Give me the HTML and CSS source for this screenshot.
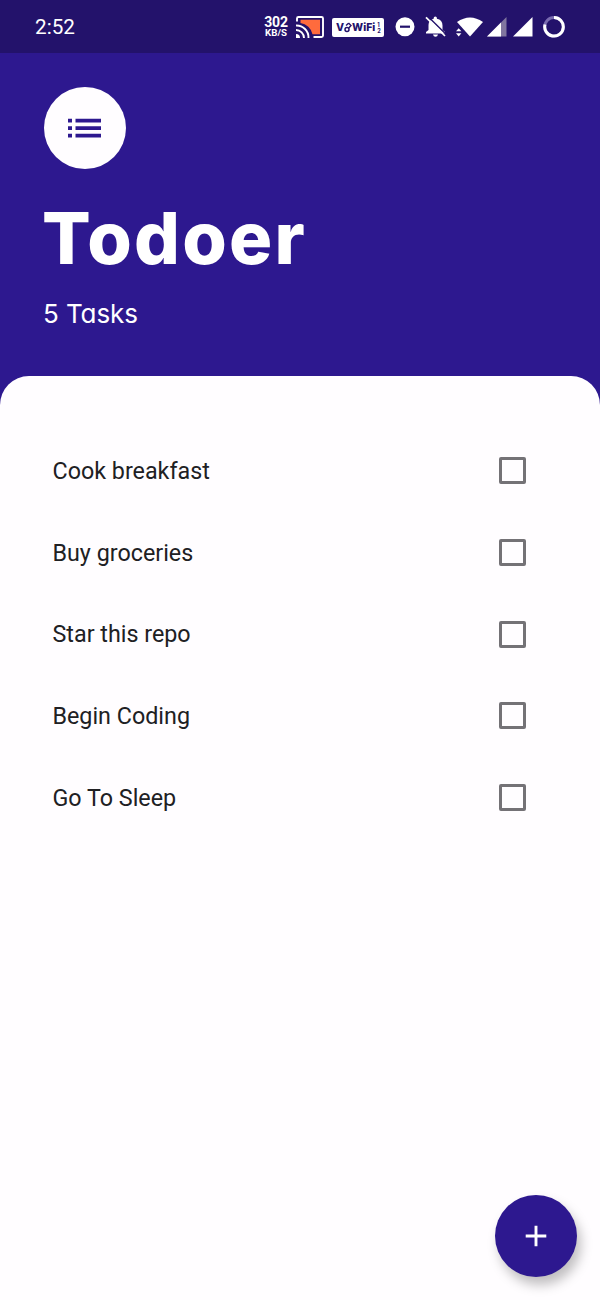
FILE: index.html
```html
<!DOCTYPE html>
<html lang="en">
<head>
<meta charset="utf-8">
<title>Todoer</title>
<link rel="stylesheet" href="styles.css">
</head>
<body>
<div class="app">
  <div class="status">
    <span class="clock">2:52</span>
    <div class="tray">
      <div class="speed"><span class="rate">302</span><span class="unit">KB/S</span></div>
      <svg class="cast" width="30" height="53" viewBox="295 0 30 53">
        <path d="M300.500 19.800H320V34.200H312.500A14 14 0 0 0 300.500 23Z" fill="#ff6b3d"/>
        <path d="M297 21.500V18.500Q297 17 298.500 17H321.500Q323 17 323 18.500V35.500Q323 37 321.500 37H313.500" fill="none" stroke="#fff" stroke-width="1.900"/>
        <path d="M296 25.500A12 12 0 0 1 308.500 38M296 30A8 8 0 0 1 304 38" fill="none" stroke="#fff" stroke-width="1.900"/>
        <path d="M296 34A4 4 0 0 1 300 38H296Z" fill="#fff"/>
      </svg>
      <div class="vowifi"><span>V</span>
        <svg width="8" height="13" viewBox="0 0 8 13"><circle cx="3" cy="8.500" r="2" fill="none" stroke="#23126b" stroke-width="1.500"/><path d="M2 4.500L4.500 2.300M4.800 7L7 4.500L4.500 2" fill="none" stroke="#23126b" stroke-width="1.400"/></svg>
        <span>WiFi</span><span class="sim"><i>1</i><i>2</i></span></div>
      <svg class="dnd" width="20" height="53" viewBox="395 0 20 53"><circle cx="405" cy="26.700" r="9.500" fill="#fff"/><path d="M400 26.700H410" stroke="#23126b" stroke-width="2.200"/></svg>
      <svg class="bell" width="22" height="53" viewBox="425 0 22 53">
        <path d="M426 33.500V32L428.500 30V25Q428.500 20 433.700 18.800V18Q433.700 16.500 435.300 16.500T436.900 18V18.800Q442.500 20 442.500 25.500V30L445 32V33.500ZM433 34.500H438Q437.500 36.700 435.500 36.700T433 34.500Z" fill="#fff"/>
        <path d="M427.500 16L446 34.200" stroke="#23126b" stroke-width="1.400"/><path d="M426 17.300L445 36" stroke="#fff" stroke-width="1.700"/>
      </svg>
      <svg class="wifi" width="27" height="53" viewBox="456 0 27 53"><path d="M457 22Q463.500 17.500 470 17.500T483 22L470 36.500Z" fill="#fff"/><path d="M455.500 27.500H461L463.500 32L461 37H455.500Z" fill="#23126b"/><path d="M456 31.300L458.700 28.200L461.400 31.300ZM456 33.300H461.400L458.700 36.400Z" fill="#fff"/></svg>
      <svg class="signal" width="20" height="53" viewBox="487 0 20 53"><path d="M487 36.500L506.500 17V36.500Z" fill="#80769f"/><path d="M487 36.500L501 22.500V36.500Z" fill="#fff"/></svg>
      <svg class="signal2" width="20" height="53" viewBox="513 0 20 53"><path d="M513 36.500L532.500 17V36.500Z" fill="#fff"/></svg>
      <svg class="battery" width="22" height="53" viewBox="543 0 22 53"><circle cx="554" cy="26.800" r="9.300" fill="none" stroke="#796baf" stroke-width="3"/><path d="M554 17.500A9.300 9.300 0 1 1 545 24.500" fill="none" stroke="#fff" stroke-width="3"/></svg>
    </div>
  </div>
  <header class="header">
    <div class="avatar">
      <svg width="34" height="20" viewBox="0 0 34 20" fill="#2d188f"><path d="M0 .8H4V4.500H0ZM0 8.300H4V12H0ZM0 15.800H4V19.500H0ZM7.500 .8H33V4.500H7.500ZM7.500 8.300H33V12H7.500ZM7.500 15.800H33V19.500H7.500Z"/></svg>
    </div>
    <h1 class="title">Todoer</h1>
    <p class="count">5 Tasks</p>
  </header>
  <main class="sheet">
    <ul class="tasks">
      <li class="task"><span>Cook breakfast</span><span class="box"></span></li>
      <li class="task"><span>Buy groceries</span><span class="box"></span></li>
      <li class="task"><span>Star this repo</span><span class="box"></span></li>
      <li class="task"><span>Begin Coding</span><span class="box"></span></li>
      <li class="task"><span>Go To Sleep</span><span class="box"></span></li>
    </ul>
  </main>
  <div class="fab"><svg width="22" height="22" viewBox="0 0 22 22"><path d="M11 .7V21.300M.7 11H21.300" stroke="#fff" stroke-width="2.900"/></svg></div>
</div>
</body>
</html>
```
FILE: styles.css
```css
* { box-sizing: border-box; }
body { margin: 0; font-family: Roboto, sans-serif; }
.app {
  position: relative;
  width: 600px;
  height: 1300px;
  display: flex;
  flex-direction: column;
  background: #2d188f;
  overflow: hidden;
}
.status {
  height: 53px;
  flex: none;
  display: flex;
  align-items: center;
  justify-content: space-between;
  padding: 0 35px;
  background: #23126b;
  color: #fff;
}
.clock { padding-top: 1px; font-size: 20.7px; line-height: 53px; }
.tray { display: flex; align-items: center; }
.tray > svg { display: block; flex: none; }
.speed {
  width: 24px;
  margin-right: 1px;
  display: flex;
  flex-direction: column;
  align-items: center;
  font-weight: 700;
}
.rate { font-size: 14px; line-height: 12px; letter-spacing: -0.2px; }
.unit { font-size: 9.7px; line-height: 10px; white-space: nowrap; }
.cast { margin-left: 6px; }
.vowifi {
  width: 52px;
  height: 19px;
  margin: 2px 0 0 7px;
  padding-left: 4px;
  display: flex;
  align-items: center;
  border-radius: 2px;
  background: #fff;
  color: #23126b;
  font: 800 10.5px/19px Inter, sans-serif;
}
.sim { display: flex; flex-direction: column; margin-left: 2px; }
.sim i { font: 700 5.5px/6px Inter, sans-serif; }
.dnd { margin-left: 11px; }
.bell { margin-left: 10px; }
.wifi { margin-left: 9px; }
.signal { margin-left: 4px; }
.signal2 { margin-left: 6px; }
.battery { margin-left: 10px; }
.header { height: 323px; flex: none; padding: 34px 44px 0; color: #fff; }
.avatar {
  width: 82px;
  height: 82px;
  display: flex;
  align-items: center;
  justify-content: center;
  border-radius: 50%;
  background: #fffdff;
}
.title {
  margin: 24px 0 0 -2px;
  font: 800 72px/90px Inter, sans-serif;
  letter-spacing: 2.2px;
}
.count {
  margin: 14px 0 0 -1px;
  font: 400 26px/34px Inter, sans-serif;
  font-feature-settings: "cv11";
  letter-spacing: -0.1px;
}
.sheet {
  flex: 1;
  padding: 54px 74px 0 52.5px;
  border-radius: 29px 29px 0 0;
  background: #fffdff;
}
.tasks { margin: 0; padding: 0; list-style: none; }
.task {
  height: 81.7px;
  display: flex;
  align-items: center;
  justify-content: space-between;
  color: #202023;
  font-size: 23.3px;
}
.box { width: 27px; height: 27px; border: 3px solid #747276; border-radius: 2px; }
.fab {
  position: absolute;
  right: 23px;
  bottom: 23px;
  width: 82px;
  height: 82px;
  display: flex;
  align-items: center;
  justify-content: center;
  border-radius: 50%;
  background: #2d188f;
  box-shadow: 4px 8px 12px rgba(0, 0, 0, .25);
}
```
